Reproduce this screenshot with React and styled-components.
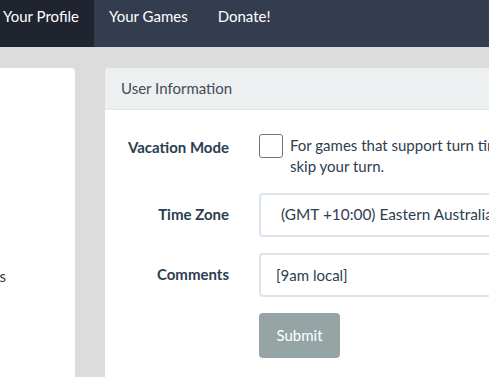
import styled, { createGlobalStyle } from "styled-components";

const Global = createGlobalStyle`
    html, body {
        margin: 0;
        padding: 0;
        overflow: hidden;
        background: #dcdcdc;
    }
    body {
        font-family: Lato, "Open Sans", "Liberation Sans", sans-serif;
        font-size: 15px;
        line-height: 1.5;
        color: #2c3e50;
    }
    * { box-sizing: border-box; }
`

function App() {
    return (
        <>
            <Global />
            <Navbar>
                <NavList>
                    <NavItem active>Your Profile</NavItem>
                    <NavItem>Your Games</NavItem>
                    <NavItem>Donate!</NavItem>
                </NavList>
            </Navbar>
            <Main>
                <SideCard>
                    <SideLink>Notifications</SideLink>
                </SideCard>
                <Card>
                    <CardHeader>User Information</CardHeader>
                    <CardBody>
                        <FormRow>
                            <Label>Vacation Mode</Label>
                            <Controls>
                                <CheckRow>
                                    <Checkbox type="checkbox" />
                                    <Help>For games that support turn timers, vacation mode will automatically<br />skip your turn.</Help>
                                </CheckRow>
                            </Controls>
                        </FormRow>
                        <FormRow>
                            <Label field>Time Zone</Label>
                            <Controls>
                                <Field as="div" select>(GMT +10:00) Eastern Australia, Guam, Vladivostok</Field>
                            </Controls>
                        </FormRow>
                        <FormRow>
                            <Label field>Comments</Label>
                            <Controls>
                                <Field defaultValue="[9am local]" />
                            </Controls>
                        </FormRow>
                        <FormRow>
                            <Label />
                            <Controls>
                                <Button>Submit</Button>
                            </Controls>
                        </FormRow>
                    </CardBody>
                </Card>
            </Main>
        </>
    );
}

const Navbar = styled('nav')`
    height: 47px;
    background: #343d50;
    display: flex;
`
const NavList = styled('div')`
    display: flex;
    margin-left: -12px;
`
const NavItem = styled('a')`
    display: block;
    height: 47px;
    padding: 5px 15px 0 15px;
    color: #ffffff;
    background: ${p => p.active ? '#1f242f' : 'transparent'};
    white-space: nowrap;
`
const Main = styled('div')`
    display: flex;
    gap: 30px;
    padding-top: 21px;
    margin-left: -145px;
`
const SideCard = styled('div')`
    flex: none;
    width: 220px;
    height: 400px;
    background: #fff;
    border-radius: 4px;
    padding-top: 197px;
`
const SideLink = styled('div')`
    text-align: right;
    padding-right: 69px;
    color: #333;
`
const Card = styled('div')`
    flex: none;
    width: 560px;
    height: 400px;
    background: #fff;
    border-radius: 4px;
    overflow: hidden;
`
const CardHeader = styled('div')`
    height: 42px;
    padding: 9px 16px;
    background: #ecf0f1;
    border-bottom: 1px solid #e3e7e8;
    color: #444b55;
`
const CardBody = styled('div')`
    padding: 24px 20px;
    display: flex;
    flex-direction: column;
    gap: 16px;
`
const FormRow = styled('div')`
    display: flex;
    gap: 30px;
`
const Label = styled('div')`
    flex: none;
    width: 104px;
    text-align: right;
    font-weight: bold;
    color: #2c3e50;
    padding-top: ${p => p.field ? '10px' : '2px'};
`
const Controls = styled('div')`
    flex: 1;
`
const CheckRow = styled('div')`
    display: flex;
    gap: 7px;
    align-items: flex-start;
`
const Checkbox = styled('input')`
    appearance: none;
    flex: none;
    margin: 0;
    width: 24px;
    height: 24px;
    border: 1px solid #707478;
    border-radius: 3px;
    background: #fff;
`
const Help = styled('div')`
    line-height: 21px;
    padding-top: 1px;
    color: #2c3e50;
    white-space: nowrap;
`
const Field = styled('input')`
    display: block;
    width: 100%;
    height: 44px;
    border: 2px solid #dce4ec;
    border-radius: 4px;
    padding: 0 ${p => p.select ? '20px' : '15px'};
    font: inherit;
    font-size: ${p => p.select ? '15.4px' : '15px'};
    line-height: 39px;
    color: #2c3e50;
    white-space: nowrap;
    overflow: hidden;
    outline: none;
`
const Button = styled('button')`
    width: 81px;
    height: 45px;
    border: none;
    border-radius: 4px;
    background: #95a5a6;
    color: #fff;
    font: inherit;
`

export default App;
